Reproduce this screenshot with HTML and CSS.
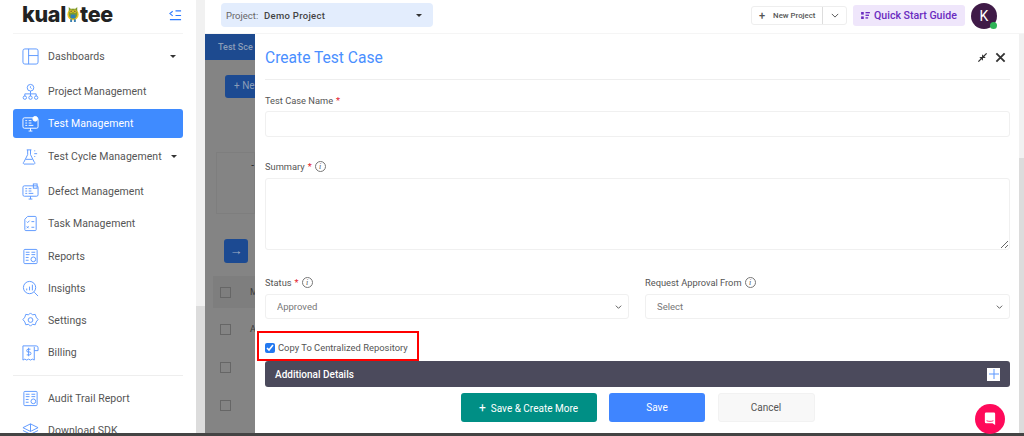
FILE: index.html
```html
<!DOCTYPE html>
<html lang="en">
<head>
<meta charset="utf-8">
<title>Create Test Case</title>
<link rel="stylesheet" href="styles.css">
</head>
<body>
<div class="app">
  <div class="main">
    <aside class="sidebar">
      <div class="brand">
        <span class="logo">kual<svg class="owl" viewBox="0 0 12 18"><circle cx="6" cy="9" r="6" fill="#f2c522"/><path d="M1.500 1l2 2h5l2-2v8a4.500 4.500 0 0 1-9 0z" fill="#7d9a2e"/><circle cx="4" cy="5.500" r="1.700" fill="#f2c522"/><circle cx="8" cy="5.500" r="1.700" fill="#f2c522"/><circle cx="4" cy="5.500" r=".7" fill="#234"/><circle cx="8" cy="5.500" r=".7" fill="#234"/><path d="M3.500 9h5v4h-5z" fill="#2f7fb8"/><path d="M3 14h2v3H3zM7 14h2v3H7z" fill="#3a7fb0"/></svg>tee</span>
        <svg class="collapse" viewBox="0 0 14 12" fill="none" stroke="#2f7bff" stroke-width="1.200"><path d="M4 2L1 4.500 4 7M7 1.500h6M7 6.500h6M1 11h12"/></svg>
      </div>
      <nav class="nav">
        <a class="item first"><svg class="ico" viewBox="0 0 18 18"><rect x="1" y="1" width="16" height="16" rx="2"/><path d="M7 1v16M7 8h10"/></svg><span>Dashboards</span><i class="caret far"></i></a>
        <a class="item gap3"><svg class="ico" viewBox="0 0 18 18"><circle cx="9" cy="5" r="3.500"/><path d="M9 3.500V5l1 1M9 8.500V11M3 14v-2.500h12V14M9 11v3"/><circle cx="3" cy="15.500" r="1.800"/><circle cx="9" cy="15.500" r="1.800"/><circle cx="15" cy="15.500" r="1.800"/></svg><span>Project Management</span></a>
        <a class="item active"><svg class="ico" viewBox="0 0 18 18"><rect x="1" y="3" width="16" height="11" rx="1.500"/><path d="M3.500 6h2M3.500 8.500h2M3.500 11h2M7 6h3M7 8.500h3M7 11h5M7 17h4M9 14v3"/><circle cx="14" cy="4" r="2.500" fill="currentColor"/></svg><span>Test Management</span></a>
        <a class="item tight"><svg class="ico" viewBox="0 0 18 18"><path d="M5 2h5M6 2v5l-4 8a1 1 0 0 0 1 2h9a1 1 0 0 0 1-2L9 7V2M4 12h7M13 3h1M13 6h3M13 9h1"/></svg><span>Test Cycle Management</span><i class="caret near"></i></a>
        <a class="item gap3"><svg class="ico" viewBox="0 0 18 18"><rect x="1" y="3" width="16" height="11" rx="1.500"/><path d="M3.500 6h2M3.500 8.500h2M3.500 11h2M7 6h3M7 8.500h3M7 11h5M7 17h4M9 14v3"/><rect x="12" y="1" width="4" height="4.500"/></svg><span>Defect Management</span></a>
        <a class="item"><svg class="ico" viewBox="0 0 18 18"><path d="M6 1.500h8a1 1 0 0 1 1 1v13a1 1 0 0 1-1 1H4a1 1 0 0 1-1-1V4.500z"/><path d="M5 7l1 1 2-2M10 7h3M5 12l2 2M7 12l-2 2M10 13h3"/></svg><span>Task Management</span></a>
        <a class="item"><svg class="ico" viewBox="0 0 18 18"><rect x="2" y="1.500" width="14" height="15" rx="1"/><path d="M4 4.500h4M4 7h4M4 10h3M4 13h3M10 4.500h4M10 7h4"/><circle cx="12" cy="12" r="2.500"/></svg><span>Reports</span></a>
        <a class="item"><svg class="ico" viewBox="0 0 18 18"><circle cx="8" cy="8" r="6.500"/><path d="M5 11V9M8 11V7M11 11V5M13 13l4 4"/></svg><span>Insights</span></a>
        <a class="item"><svg class="ico" viewBox="0 0 18 18"><path d="M9 1l2 2 3-.5 1 3 2 2.500-2 2.500-1 3-3-.5-2 2-2-2-3 .5-1-3L1 8l2-2.500 1-3 3 .5z"/><circle cx="9" cy="8.500" r="2.500"/></svg><span>Settings</span></a>
        <a class="item"><svg class="ico" viewBox="0 0 18 18"><path d="M13 3v14l-2-1-2 1-2-1-2 1-2-1-2 1V2h14a2 2 0 0 1 2 2v3h-4"/><path d="M9 5.500H6.500a1.500 1.500 0 0 0 0 3h1.500a1.500 1.500 0 0 1 0 3H5M7 4v9"/></svg><span>Billing</span></a>
        <hr class="rule">
        <a class="item audit"><svg class="ico" viewBox="0 0 18 18"><rect x="2" y="1.500" width="14" height="15" rx="1"/><path d="M4 4.500h4M4 7h4M4 10h3M4 13h3M10 4.500h4M10 7h4"/><circle cx="12" cy="12" r="2.500"/></svg><span>Audit Trail Report</span></a>
        <a class="item"><svg class="ico" viewBox="0 0 18 18"><path d="M9 2l8 4-8 4-8-4zM1 9l8 4 8-4M1 12l8 4 8-4M9 2v8"/></svg><span>Download SDK</span></a>
      </nav>
    </aside>
    <div class="scroll-left"><div class="thumb-left"></div></div>
    <div class="content">
      <header class="topbar">
        <div class="project"><span class="project-label">Project:</span><strong class="project-name">Demo Project</strong><i class="caret dark"></i></div>
        <div class="actions">
          <div class="split"><span class="split-main"><span class="plus">+</span>New Project</span><span class="split-more"><svg viewBox="0 0 10 6" fill="none" stroke="#555" stroke-width="1.200"><path d="M1 1l4 4 4-4"/></svg></span></div>
          <div class="guide"><svg viewBox="0 0 10 8" fill="#6a2bc0"><rect width="3" height="3"/><rect y="5" width="3" height="3"/><rect x="5" width="5" height="1.500"/><rect x="5" y="3" width="4" height="1.500"/><rect x="5" y="6" width="3" height="1.500"/></svg>Quick Start Guide</div>
          <div class="avatar">K<span class="online"></span></div>
        </div>
      </header>
      <div class="body">
        <div class="backdrop">
          <div class="bg-tabs">Test Sce</div>
          <div class="bg-new">+ Ne</div>
          <div class="bg-panel"><span class="bg-dash">-</span></div>
          <div class="bg-arrow">→</div>
          <div class="bg-table">
            <div class="bg-row head"><i class="bg-check"></i><span>M</span></div>
            <div class="bg-row"><i class="bg-check"></i><span>A</span></div>
            <div class="bg-row"><i class="bg-check"></i></div>
            <div class="bg-row"><i class="bg-check"></i></div>
          </div>
        </div>
        <section class="modal">
          <div class="modal-head">
            <h1>Create Test Case</h1>
            <div class="modal-tools">
              <svg viewBox="0 0 12 12" fill="#333"><path d="M1 10l3-3-1.500-1.500H6.500V9.500L5 8l-3 3zM11 2L8 5l1.500 1.500H5.500V2.500L7 4l3-3z"/></svg>
              <svg viewBox="0 0 12 12" fill="none" stroke="#333" stroke-width="2"><path d="M1.500 1.500l9 9M10.500 1.500l-9 9"/></svg>
            </div>
          </div>
          <label class="label first-label">Test Case Name <em>*</em></label>
          <input class="field name" type="text">
          <label class="label summary-label">Summary <em>*</em> <i class="info">i</i></label>
          <textarea class="field summary"></textarea>
          <div class="cols">
            <div class="col">
              <label class="label">Status <em>*</em> <i class="info">i</i></label>
              <div class="pick-wrap">
                <select class="field pick"><option>Approved</option></select>
                <svg class="chev" viewBox="0 0 10 6" fill="none" stroke="#555" stroke-width="1.400"><path d="M1 1l4 4 4-4"/></svg>
              </div>
            </div>
            <div class="col">
              <label class="label">Request Approval From <i class="info">i</i></label>
              <div class="pick-wrap">
                <select class="field pick"><option>Select</option></select>
                <svg class="chev" viewBox="0 0 10 6" fill="none" stroke="#555" stroke-width="1.400"><path d="M1 1l4 4 4-4"/></svg>
              </div>
            </div>
          </div>
          <label class="copy"><input type="checkbox" checked><span>Copy To Centralized Repository</span></label>
          <div class="details"><strong>Additional Details</strong><span class="expand"><svg viewBox="0 0 10 10" fill="none" stroke="#5a97ff" stroke-width="1"><path d="M5 0v10M0 5h10"/></svg></span></div>
          <div class="buttons">
            <button class="btn teal" type="button"><span class="plus">+</span>Save &amp; Create More</button>
            <button class="btn blue" type="button">Save</button>
            <button class="btn plain" type="button">Cancel</button>
          </div>
        </section>
        <div class="scroll-right"><div class="thumb-right"></div></div>
      </div>
    </div>
  </div>
  <div class="strip"></div>
</div>
<div class="chat"><svg viewBox="0 0 14 16"><path d="M1 2a1.500 1.500 0 0 1 1.500-1.500h9A1.500 1.500 0 0 1 13 2v13l-3-2H2.500A1.500 1.500 0 0 1 1 11.500z" fill="#fff"/><path d="M3 10c2 1 6 1 8 0" stroke="#ff0a5a" fill="none"/></svg></div>
</body>
</html>
```
FILE: styles.css
```css
* { box-sizing: border-box; }
html, body { margin: 0; height: 100%; overflow: hidden; }
body { font-family: Roboto, "Liberation Sans", sans-serif; color: #555; background: #fff; }
.app { display: flex; flex-direction: column; height: 436px; }
.main { display: flex; flex: 1; min-height: 0; }
.strip { height: 3px; background: #444; }

.sidebar { width: 196px; flex: none; background: #fff; overflow: hidden; }
.brand { display: flex; align-items: center; justify-content: space-between; height: 34px; margin: 0 13px; padding: 0 0 4px 9px; border-bottom: 1px solid #f4f4f4; }
.logo { display: flex; align-items: center; font-family: Inter, sans-serif; font-weight: 800; font-size: 21.500px; letter-spacing: -.3px; line-height: 1; color: #222; }
.owl { width: 12px; height: 17px; margin: 0 1px; }
.collapse { width: 13px; height: 12px; margin-right: 1px; }
.nav { display: flex; flex-direction: column; }
.item { display: flex; align-items: center; gap: 9px; height: 29px; margin: 3.200px 13px 0; padding-left: 9px; font-size: 10.500px; letter-spacing: .05px; color: #555; border-radius: 3px; white-space: nowrap; }
.item.first { margin-top: 8px; }
.item.gap3 { margin-top: 6px; }
.item.tight { margin-top: 4px; }
.item.active { background: #3f8bff; color: #fff; }
.item.audit { margin-top: 8px; }
.ico { width: 17px; height: 17px; flex: none; fill: none; stroke: #5a97ff; stroke-width: 1; }
.active .ico { stroke: #fff; color: #fff; }
.caret { width: 0; height: 0; border: 3.500px solid transparent; border-top: 3.500px solid #333; border-bottom: 0; }
.caret.far { margin-left: auto; margin-right: 7px; }
.caret.near { margin-left: auto; margin-right: 8px; }
.rule { width: 170px; margin: 8px 13px 0; border: 0; border-top: 1px solid #eee; }

.scroll-left { width: 9px; flex: none; background: #dcdcdc; }
.thumb-left { height: 306px; background: #f1f1f1; }

.content { flex: 1; min-width: 0; display: flex; flex-direction: column; }
.topbar { display: flex; align-items: center; justify-content: space-between; height: 34px; flex: none; padding: 0 27px 4px 16px; border-bottom: 1px solid #f5f5f5; background: #fff; }
.project { display: flex; align-items: center; width: 212px; height: 24px; margin-top: 1px; padding: 0 11px 0 5px; border-radius: 4px; background: #e3edfd; }
.project-label { width: 38px; font-size: 9.500px; color: #666; }
.project-name { font-size: 9.500px; font-weight: 500; letter-spacing: .3px; color: #444; }
.caret.dark { margin-left: auto; }
.actions { display: flex; align-items: center; margin-top: 2px; }
.split { display: flex; width: 96px; height: 19px; border: 1px solid #eee; border-radius: 3px; font-size: 7.800px; font-weight: 500; color: #555; }
.split-main { display: flex; align-items: center; flex: 1; padding-left: 7px; border-right: 1px solid #ddd; white-space: nowrap; }
.split-main .plus { margin-right: 8px; font-size: 11px; }
.split-more { display: flex; align-items: center; justify-content: center; width: 23px; }
.split-more svg { width: 8px; height: 5px; }
.guide { display: flex; align-items: center; gap: 4px; width: 112px; height: 21px; margin-left: 6px; padding-left: 8px; border-radius: 3px; background: #efe6fb; color: #6a2bc0; font-size: 10.600px; font-weight: 500; white-space: nowrap; }
.guide svg { width: 9px; height: 7px; }
.avatar { position: relative; display: flex; align-items: center; justify-content: center; width: 26px; height: 26px; margin-left: 6px; border-radius: 50%; background: #3f1a47; color: #fff; font-size: 14px; }
.online { position: absolute; right: 0; bottom: 0; width: 7px; height: 7px; border-radius: 50%; background: #2fb457; }

.body { flex: 1; min-height: 0; display: flex; }
.backdrop { width: 50px; flex: none; overflow: hidden; background: #848484; white-space: nowrap; font-size: 9px; color: #3c3c3c; }
.bg-tabs { height: 26px; padding: 8px 0 0 13px; background: #1d4a8f; color: #8b9db8; font-weight: 500; }
.bg-new { width: 30px; height: 23px; margin: 15px 0 0 20px; padding: 5px 0 0 9px; border-radius: 3px 0 0 3px; background: #1c4a92; color: #8b9db8; font-size: 10px; }
.bg-panel { position: relative; height: 62px; margin: 54px 0 0 11px; border: 1px solid #7e7e7e; }
.bg-dash { position: absolute; top: 7px; right: 0; color: #222; font-size: 10px; }
.bg-arrow { width: 24px; height: 24px; margin: 25px 0 0 19px; border-radius: 3px; background: #1c4a92; color: #a0afc6; text-align: center; font-size: 13px; line-height: 24px; }
.bg-table { margin: 13px 0 0 8px; }
.bg-row { display: flex; align-items: center; gap: 19px; height: 38px; padding-left: 7px; }
.bg-row.head { height: 32px; margin-bottom: 2px; background: #7e7e7e; }
.bg-check { width: 11px; height: 11px; flex: none; border: 1px solid #666; }

.modal { flex: 1; min-width: 0; padding: 0 9px 0 10px; background: #fff; display: flex; flex-direction: column; }
.modal-head { display: flex; align-items: center; justify-content: space-between; height: 46px; flex: none; padding: 2px 4px 0 0; border-bottom: 1px solid #eee; }
.modal-head h1 { margin: 0; font-size: 15.600px; font-weight: 400; color: #4a8fff; }
.modal-tools { display: flex; align-items: center; gap: 7px; }
.modal-tools svg { width: 11px; height: 11px; }
.label { display: flex; align-items: center; gap: 3px; height: 14px; font-size: 9.300px; color: #555; flex: none; }
.label em { color: #e3222c; font-style: normal; }
.first-label { margin-top: 13px; }
.info { display: inline-flex; align-items: center; justify-content: center; width: 11px; height: 11px; border: 1px solid #777; border-radius: 50%; font-size: 8px; font-family: "Liberation Serif", serif; color: #555; }
.field { display: block; width: 100%; border: 1px solid #f0f0f0; border-radius: 3px; background: #fff; font: 9.500px Roboto, sans-serif; color: #777; flex: none; }
.name { height: 26px; margin-top: 4px; }
.summary-label { margin-top: 22px; }
.summary { height: 72px; margin-top: 5px; }
.cols { display: grid; grid-template-columns: 364px 1fr; gap: 16px; margin-top: 25px; flex: none; }
.pick-wrap { position: relative; margin-top: 5px; }
.pick { height: 25px; padding-left: 11px; appearance: none; }
.chev { position: absolute; right: 7px; top: 11px; width: 7px; height: 4px; }
.copy { display: flex; align-items: center; gap: 3px; width: 162px; height: 30px; margin: 12px 0 0 -8px; padding: 3px 0 0 6px; border: 2px solid #f00; font-size: 9.400px; color: #555; flex: none; white-space: nowrap; }
.copy input { width: 10px; height: 10px; margin: 0; accent-color: #2278f0; }
.details { display: flex; align-items: center; justify-content: space-between; height: 26px; padding: 0 10px; border-radius: 3px; background: #4b4a5c; color: #fff; font-size: 10px; flex: none; }
.details strong { font-weight: 500; }
.expand { display: flex; width: 13px; height: 13px; padding: 1.500px; background: #fff; }
.buttons { display: flex; justify-content: center; gap: 12.500px; margin-top: 6px; flex: none; }
.btn { height: 29px; border: 0; border-radius: 3px; font: 10px Roboto, sans-serif; font-weight: 400; }
.teal { width: 136px; background: #008f85; color: #fff; }
.teal .plus { margin-right: 5px; font-size: 12px; }
.blue { width: 96px; background: #3f85ff; color: #fff; }
.plain { width: 97px; border: 1px solid #f2f2f2; background: #f8f8f8; color: #555; }

.scroll-right { width: 5px; flex: none; background: #dcdcdc; }
.thumb-right { height: 124px; background: #f1f1f1; }

.chat { position: fixed; left: 975px; top: 404px; display: flex; align-items: center; justify-content: center; width: 30px; height: 30px; border-radius: 50%; background: #ff0a5a; }
.chat svg { width: 12px; height: 14px; }
```
